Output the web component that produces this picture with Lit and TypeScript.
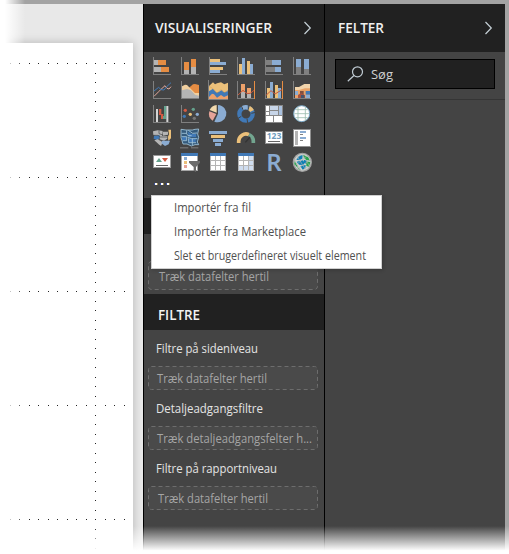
import { LitElement, html, css, svg } from "lit";
import { customElement } from "lit/decorators.js";

const O = "#e68d43", B = "#8bacd2", Y = "#ebc07a", G = "#b4b4b4", D = "#808080", N = "#4179b6";
const r = (x: number, y: number, w: number, h: number, fill: string) =>
  svg`<rect x=${x} y=${y} width=${w} height=${h} fill=${fill}/>`;
const line = (d: string, stroke: string, w = 3) =>
  svg`<path d=${d} fill="none" stroke=${stroke} stroke-width=${w}/>`;
const p = (d: string, fill: string) => svg`<path d=${d} fill=${fill}/>`;
const axis = [r(0, 0, 3, 54, D), r(0, 51, 54, 3, D)];

// Every icon is drawn on a 54-unit square, three units to a pixel.
const icons = [
  [axis, r(3, 9, 12, 15, G), r(15, 9, 24, 15, O), r(3, 30, 21, 15, G), r(24, 30, 24, 15, O)],
  [axis, r(9, 15, 15, 24, O), r(9, 39, 15, 12, G), r(30, 6, 15, 24, O), r(30, 30, 15, 21, G)],
  [axis, r(3, 6, 30, 9, Y), r(3, 15, 48, 9, B), r(3, 30, 39, 9, Y), r(3, 39, 30, 9, B)],
  [axis, r(6, 21, 9, 30, Y), r(15, 3, 9, 48, B), r(30, 12, 9, 39, Y), r(39, 21, 9, 30, B)],
  [axis, r(3, 9, 18, 15, D), r(21, 9, 27, 15, B), r(3, 30, 27, 15, D), r(30, 30, 18, 15, B)],
  [axis, r(9, 6, 15, 24, B), r(9, 30, 15, 21, D), r(33, 6, 15, 30, B), r(33, 36, 15, 15, D)],
  [axis, line("M3 46 L18 31 L24 25 L36 14 L42 22 L48 24 L54 17", "#e2a79b"), line("M3 30 L17 19 L24 26 L33 27 L42 16 L54 5", N)],
  [axis, p("M3 20 L24 20 L36 10 L42 9 L54 12 V51 H3Z", O), p("M3 16 L12 11 L18 12 L27 21 L42 36 L54 36 V51 H3Z", "#f0cf9f"), p("M3 28 L18 24 L30 28 L42 41 L54 44 V51 H3Z", G)],
  [r(-3, -3, 3, 57, D), r(-3, 54, 60, 3, D), p("M0 15 L12 4 L18 10 L24 7 L36 4 L46 10 L57 5 V34 H0Z", Y), p("M0 31 L12 23 L24 36 L38 27 L46 35 L57 28 V50 H0Z", N), p("M0 48 L9 38 L15 40 L24 50 L36 42 L45 48 L57 43 V54 H0Z", "#eda16a"), line("M0 16 L12 23 L24 36 L36 26 L46 34 L57 29", "#d7a461", 2)],
  [axis, r(12, 9, 12, 27, "#eda16a"), r(12, 33, 12, 18, G), r(30, 21, 12, 18, "#eda16a"), r(30, 36, 12, 15, G), r(51, 0, 3, 54, O), line("M3 42 L18 28 L30 38 L40 37 L51 28", "#c7573b")],
  [axis, r(6, 21, 9, 30, Y), r(15, 3, 9, 48, B), r(30, 12, 9, 39, Y), r(39, 21, 9, 30, B), r(51, 0, 3, 54, O), line("M3 43 L18 29 L30 39 L51 26", "#c7573b")],
  [axis, p("M6 18 H18 L34 9 H51 V24 L36 27 L18 31 H6Z", "#f2d5ac"), p("M6 27 H18 L36 22 H51 V51 H6Z", "#e9a469"), r(6, 30, 9, 12, B), r(21, 30, 11, 12, "#80503f"), r(38, 30, 13, 11, N), p("M15 42 L24 36 L36 43 V51 H15Z", "#a55341"), r(6, 42, 9, 9, "#eda16a"), r(24, 42, 10, 9, "#46546b"), r(38, 42, 13, 9, B)],
  [axis, r(9, 12, 6, 39, "#d4d4d4"), r(18, 12, 7, 18, "#d45b43"), r(24, 27, 7, 15, "#d45b43"), r(30, 33, 6, 9, "#64a18c"), r(33, 3, 7, 39, "#64a18c"), r(40, 3, 6, 48, "#d4d4d4")],
  [axis, [[13, 16, "#d45b43"], [37, 13, "#64a18c"], [28, 28, Y], [10, 34, N], [40, 40, "#777"], [49, 28, B]].map(([x, y, c]) => svg`<circle cx=${x} cy=${y} r="5" fill=${c}/>`)],
  [p("M27 26 V0 A26 26 0 1 1 16 50Z", B), p("M23 23 V0 A25 25 0 0 0 2 15Z", "#f2d8ac"), p("M22 27 L1 19 A25 25 0 0 0 11 47Z", "#e6a398")],
  [svg`<circle cx="27" cy="27" r="20" fill="none" stroke=${N} stroke-width="13"/>`, line("M15 10 A20 20 0 0 1 34 8", B, 13), line("M36 9 A20 20 0 0 1 45 18", Y, 13), line("M12 0 L18 14 M34 0 L34 14 M56 22 L43 25 M32 54 L30 41 M0 42 L13 34", "#444")],
  [r(0, 0, 54, 54, "#888"), r(3, 3, 9, 15, "#fff"), r(15, 3, 24, 12, "#c7d5e8"), r(42, 3, 9, 27, "#aac1df"), r(3, 21, 9, 9, "#fff"), r(15, 18, 24, 12, "#c7d5e8"), r(3, 33, 21, 18, "#fff"), r(27, 33, 24, 18, "#fff")],
  [svg`<circle cx="26" cy="26" r="24" fill="#fff" stroke="#78a6c5" stroke-width="3"/>`, line("M15 5 V47 M37 5 V47 M4 26 H48 M8 14 H44 M8 38 H44", "#9dbdb0", 2.5)],
  [p("M0 7 L14 4 L29 6 L27 21 L16 23 L1 18Z", G), p("M29 8 H45 V17 L29 20Z", G), p("M46 2 H54 V28 L46 35 L45 23 L48 16Z", Y), p("M3 20 L20 18 V28 L12 33 L2 29Z", N), p("M21 21 H43 V29 L33 35 L20 31Z", G), p("M4 34 L16 30 L30 38 L24 51 L17 46Z", G), p("M27 35 H51 L47 46 L36 51 L25 43Z", B), line("M0 19 L15 19 L21 24 H43 M18 5 V14 L30 18 M16 31 L27 37", "#444", 2)],
  [r(-3, 55, 25, 3, D), r(30, 55, 22, 3, D), p("M0 1 L15 3 H34 L42 1 L53 0 L50 15 L53 25 L49 39 L53 47 L42 47 L31 51 L18 45 H6 L3 35 L0 26Z", "#355b7c"), p("M21 8 L31 15 H45 V24 H23Z M4 24 H16 V33 H3Z M21 29 H44 V39 H25Z", N), line("M0 1 L15 3 H34 L42 1 L53 0 L50 15 L53 25 L49 39 L53 47 L42 47 L31 51 L18 45 H6 L3 35 L0 26Z M2 13 H16 L21 20 H32 M17 4 V14 M22 4 L35 13 L48 12 M2 23 H17 V35 H5 M20 25 L32 29 H49 M23 28 V41 H45 M34 29 V48", "#a5c9df", 2.5)],
  [r(0, 6, 54, 9, B), r(6, 18, 42, 9, Y), r(12, 30, 30, 9, B), r(18, 42, 18, 9, B)],
  [line("M5 42 V37 A22 22 0 0 1 36 17", Y, 11), line("M36 17 A22 22 0 0 1 49 37 V42", "#72a58f", 11), line("M25 40 L39 24", "#333", 4)],
  [r(0, 6, 54, 39, "#909090"), r(3, 9, 48, 33, "#fff"), svg`<text x="5" y="31" textLength="44" lengthAdjust="spacingAndGlyphs" class="digits">123</text>`, r(9, 36, 36, 3, "#666")],
  [r(0, 0, 54, 54, "#909090"), r(3, 3, 48, 48, "#fff"), r(6, 6, 9, 42, G), r(21, 6, 18, 6, B), r(21, 15, 9, 3, D), r(21, 24, 18, 6, B), r(21, 33, 9, 3, D)],
  [r(0, 6, 54, 39, "#999"), r(3, 9, 48, 33, "#fff"), p("M9 27 L18 15 L27 27Z", "#64a18c"), p("M27 15 H45 L36 27Z", "#d45b43"), r(9, 36, 36, 3, "#666")],
  [r(0, 0, 51, 54, "#a5a5a5"), r(3, 9, 45, 42, "#fff"), r(0, 0, 51, 9, N), r(9, 12, 9, 9, B), r(9, 24, 9, 9, Y), r(9, 36, 9, 9, "#e6a398"), p("M24 24 H57 V29 L45 42 V57 L38 53 V42 L24 29Z", "#6c6c6c")],
  [r(3, 0, 48, 54, G), r(3, 0, 48, 9, N), [0, 1, 2].map(a => [0, 1, 2].map(b => r(6 + a * 15, 9 + b * 15, 12, 12, "#fff")))],
  [r(3, 0, 48, 54, G), r(3, 0, 48, 9, N), [0, 1, 2].map(a => [0, 1, 2].map(b => r(6 + a * 15, 9 + b * 15, 12, 12, a === 2 || b === 2 ? "#cfddf0" : "#fff")))],
  [svg`<text x="27" y="53" text-anchor="middle" class="letter">R</text>`],
  [svg`<circle cx="28" cy="28" r="27" fill="#d0d4d1" stroke="#a1a1a1" stroke-width="4"/>`, p("M18 9 L29 6 L28 17 L18 22 L10 20Z M11 26 L29 22 L36 29 L31 36 L18 35Z M22 39 L38 36 L37 46 L29 50Z M32 20 L42 23 L40 33 L34 30Z", "#0f7fb5"), p("M30 5 L45 12 L51 23 L40 21 L33 15Z M5 23 L13 37 L14 44 L4 34Z M40 25 L52 27 L48 42 L40 39Z M14 43 L24 51 L15 48Z", "#2aa34f"), line("M4 24 L24 5 M6 38 L43 8 M14 48 L51 20 M26 53 L52 36 M11 8 L38 50 M27 3 L49 38 M3 21 L23 52", "#b4b6b2", 1.8)],
];

const canvasDots = () => {
  const out: [number, number][] = [];
  for (let k = -9; k <= 3; k++) for (let j = 0; j < 5; j++) out.push([Math.round(95 + k * 9.5), 63 + j * 114]);
  for (let n = 1; n < 52; n++) if (n % 12) out.push([95, Math.round(63 + n * 9.5)]);
  return out.map(([x, y]) => svg`<rect x=${x} y=${y - 43} width="1" height="1"/>`);
};

const chevron = html`<svg class="chevron" width="9" height="14" viewBox="0 0 9 14"><path d="M1.5 1 L7.3 7 L1.5 13" fill="none" stroke="#c5d0d6" stroke-width="1.2"/></svg>`;

@customElement("app-root")
export class AppRoot extends LitElement {
  static styles = css`
    :host { display: block; position: relative; width: 509px; height: 554px; overflow: hidden; background: #a3a3a3;
      font: 12px "Open Sans", "Noto Sans", sans-serif; color: #e4e4e4; }
    * { box-sizing: border-box; }
    .frame { display: grid; grid-template-columns: 143px 182px 180px; padding-top: 4px; height: 554px; }
    .canvas { background: #e8e8e8; padding-top: 39px; overflow: hidden; }
    .page { width: 133px; height: 520px; background: #fff; box-shadow: 0 0 9px rgba(0,0,0,.22); }
    .page svg { display: block; fill: #222; shape-rendering: crispEdges; }
    .panel { background: #444; }
    .visuals { border: solid #000; border-width: 0 1px; }
    .title { display: flex; align-items: center; justify-content: space-between; height: 48px; padding: 0 12px 0 11px;
      background: #212121; color: #f0f0f0; white-space: nowrap; }
    .fields .title { padding: 0 12px 0 13px; }
    .name { display: block; overflow: visible; }
    .gallery { display: grid; grid-template-columns: repeat(6, 28px); grid-auto-rows: 24px; padding: 4px 0 0 8px; }
    .gallery svg { display: block; width: 20px; height: 20px; overflow: visible; }
    .digits { font: 700 25px "Noto Sans", sans-serif; fill: #6e9cbd; }
    .letter { font: 600 72px "Noto Sans", sans-serif; fill: #8bacd2; }
    .more { display: flex; gap: 2px; padding: 7px 0 0 10px; height: 22px; }
    .dot { width: 4px; height: 2px; background: linear-gradient(90deg, #3a4fa0 25%, #fff 25% 75%, #a08a50 75%); }
    .bar { height: 36px; background: #212121; }
    .values { height: 60px; padding: 27px 4px 0; }
    .heading { height: 36px; padding: 11px 0 0 14px; background: #212121; color: #f2f2f2; }
    .filters { padding: 0 6px 0 4px; }
    .label { height: 36px; padding: 8px 0 0 8px; }
    .group { height: 60px; }
    .drop { display: block; width: 170px; height: 24px; overflow: visible; }
    .drop.tall { height: 29px; }
    .drop rect { fill: #4a4a4a; stroke: #6d6d6d; stroke-dasharray: 4 3; }
    .drop text { fill: #a5a5a5; }
    .search { display: flex; align-items: center; margin: 7px 10px 10px; height: 30px; padding-left: 11px; gap: 7px;
      border: 1px solid #000; background: #212121; color: #d0d0d0; }
    .search .name { margin-top: -1px; }
    .rule { height: 1px; background: #353535; }
    .menu { position: absolute; left: 151px; top: 195px; width: 231px; height: 74px; background: #fff; border: 1px solid #d0d0d0; color: #505050; box-shadow: 1px 1px 4px rgba(0,0,0,.2); }
    .item { height: 24px; padding: .5px 0 0 22px; }
    .fade-left { position: absolute; left: 0; top: 0; width: 25px; height: 554px; background: linear-gradient(90deg, #fff 20%, rgba(255,255,255,0)); }
    .fade-bottom { position: absolute; left: 0; top: 526px; width: 509px; height: 28px; background: linear-gradient(rgba(255,255,255,0), #fff 88%); }
  `;

  drop(text: string, width: number, x = 9, tall = false) {
    const h = tall ? 29 : 24;
    return html`<svg class="drop ${tall ? "tall" : ""}" viewBox="0 0 170 ${h}"><rect x=".5" y=".5" width="169" height=${h - 1} rx="3"/><text x=${x} y=${tall ? 20 : 17} textLength=${width} lengthAdjust="spacingAndGlyphs">${text}</text></svg>`;
  }

  fit(text: string, width: number, size = 12, weight = 400) {
    return html`<svg class="name" width=${width + 4} height="20"><text y="15" fill="currentColor" font-size=${size} font-weight=${weight} textLength=${width} lengthAdjust="spacingAndGlyphs">${text}</text></svg>`;
  }

  render() {
    return html`
      <div class="frame">
        <div class="canvas"><div class="page"><svg width="133" height="511">${canvasDots()}</svg></div></div>
        <div class="panel visuals">
          <div class="title">${this.fit("VISUALISERINGER", 117, 14.5, 600)}${chevron}</div>
          <div class="gallery">${icons.map(i => html`<svg viewBox="-3 -3 60 60">${i}</svg>`)}</div>
          <div class="more"><i class="dot"></i><i class="dot"></i><i class="dot"></i></div>
          <div class="bar"></div>
          <div class="values">${this.drop("Træk datafelter hertil", 110, 11, true)}</div>
          <div class="heading">${this.fit("FILTRE", 42, 14, 600)}</div>
          <div class="filters">
            <div class="group"><div class="label">${this.fit("Filtre på sideniveau", 102)}</div>${this.drop("Træk datafelter hertil", 110)}</div>
            <div class="group"><div class="label">${this.fit("Detaljeadgangsfiltre", 107)}</div>${this.drop("Træk detaljeadgangsfelter h...", 155)}</div>
            <div class="group"><div class="label">${this.fit("Filtre på rapportniveau", 121)}</div>${this.drop("Træk datafelter hertil", 110, 10)}</div>
          </div>
        </div>
        <div class="panel fields">
          <div class="title">${this.fit("FELTER", 46, 14.5, 600)}${chevron}</div>
          <div class="search"><svg width="17" height="16" viewBox="0 0 17 16" fill="none" stroke="#c0cbd3" stroke-width="1.2"><circle cx="10.5" cy="5.8" r="5"/><path d="M7 9.5 L.8 15.2"/></svg>${this.fit("Søg", 22)}</div>
          <div class="rule"></div>
        </div>
      </div>
      <div class="menu">
        <div class="item">${this.fit("Importér fra fil", 77)}</div>
        <div class="item">${this.fit("Importér fra Marketplace", 132)}</div>
        <div class="item">${this.fit("Slet et brugerdefineret visuelt element", 192)}</div>
      </div>
      <div class="fade-left"></div>
      <div class="fade-bottom"></div>`;
  }
}
